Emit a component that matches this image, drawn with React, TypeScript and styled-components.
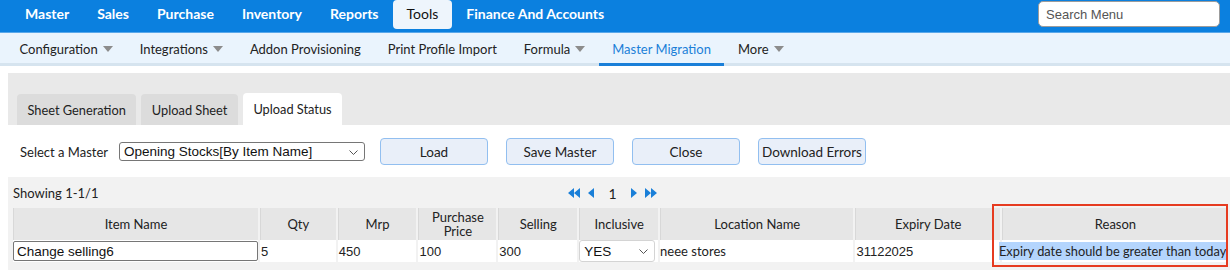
import styled, { createGlobalStyle } from "styled-components";

const BLUE = "#0b80df";
const LINK_BLUE = "#1a7fd8";

const GlobalStyle = createGlobalStyle`
  body {
    margin: 0;
    background: #ffffff;
    font-family: Lato, "Noto Sans", sans-serif;
    color: #222222;
  }
  * {
    box-sizing: border-box;
  }
`;

const TopBar = styled.div`
  display: flex;
  align-items: flex-start;
  height: 33px;
  padding-left: 11px;
  background: ${BLUE};
  border-bottom: 1px solid #5aa8ea;
`;

const NavItem = styled.div<{ active?: boolean }>`
  height: 29px;
  line-height: 28px;
  padding: 0 14px;
  font-size: 14px;
  font-weight: ${(p) => (p.active ? 400 : 700)};
  color: ${(p) => (p.active ? "#111111" : "#ffffff")};
  background: ${(p) => (p.active ? "#eef5fc" : "transparent")};
  border-radius: 4px;
`;

const Search = styled.input`
  margin: 1px 10px 0 auto;
  width: 182px;
  height: 26px;
  padding: 0 7px;
  border: 1px solid #9c9c9c;
  border-radius: 5px;
  font-family: "Liberation Sans", Arial, sans-serif;
  font-size: 13px;
  &::placeholder {
    color: #555555;
  }
`;

const SubBar = styled.div`
  display: flex;
  height: 33px;
  padding: 2px 0 0 6px;
  background: #eaf4fd;
  box-shadow: inset 0 -3px 0 #d6e4ef;
`;

const SubItem = styled.div<{ active?: boolean }>`
  display: flex;
  align-items: center;
  padding: 0 13.5px;
  font-size: 13px;
  color: ${(p) => (p.active ? LINK_BLUE : "#222222")};
  border-bottom: 3px solid ${(p) => (p.active ? LINK_BLUE : "transparent")};
`;

const Caret = styled.svg`
  margin-left: 5px;
`;

const Main = styled.div`
  padding: 7px 0 0 8px;
`;

const TabStrip = styled.div`
  display: flex;
  align-items: flex-end;
  gap: 5px;
  height: 52px;
  padding-left: 9px;
  background: #e9e9e9;
`;

const Tab = styled.div<{ active?: boolean }>`
  height: ${(p) => (p.active ? 32 : 31)}px;
  line-height: ${(p) => (p.active ? 33 : 32)}px;
  padding: 0 10.5px;
  font-size: 12.8px;
  background: ${(p) => (p.active ? "#ffffff" : "#dcdcdc")};
  border-radius: 4px 4px 0 0;
`;

const Toolbar = styled.div`
  display: flex;
  align-items: center;
  height: 51px;
  padding: 2px 0 0 12px;
  font-size: 13px;
`;

const SelectWrap = styled.div<{ w: number }>`
  position: relative;
  width: ${(p) => p.w}px;
  flex: none;
`;

const Select = styled.select<{ h: number; line: string }>`
  appearance: none;
  width: 100%;
  height: ${(p) => p.h}px;
  padding: 0 18px 0 4px;
  border: 1px solid ${(p) => p.line};
  border-radius: 3px;
  background: #ffffff;
  font-family: "Liberation Sans", Arial, sans-serif;
  font-size: 13.5px;
  color: #111111;
`;

const Chevron = styled.svg`
  position: absolute;
  right: 7px;
  top: 50%;
  margin-top: -2px;
  pointer-events: none;
`;

const Label = styled.span`
  margin-right: 11px;
`;

const ActionButton = styled.button`
  width: 108px;
  height: 27px;
  margin-left: 18px;
  padding: 0;
  border: 1px solid #92bff0;
  border-radius: 4px;
  background: #e9eff9;
  font-family: Lato, sans-serif;
  font-size: 13.5px;
  color: #222222;
  &:first-of-type {
    margin-left: 15px;
  }
`;

const ResultPanel = styled.div`
  position: relative;
  height: 93px;
  margin-top: 1px;
  padding: 0 0 0 5px;
  background: #f2f2f2;
`;

const InfoRow = styled.div`
  display: grid;
  grid-template-columns: 1fr auto 1fr;
  align-items: center;
  height: 31px;
  padding-right: 18px;
  font-size: 13px;
`;

const Pager = styled.div`
  display: flex;
  align-items: center;
  gap: 8px;
  color: #222222;
`;

const PageNum = styled.span`
  margin: 2px 6px 0;
  font-size: 14px;
`;

const Grid = styled.table`
  border-collapse: separate;
  border-spacing: 2px 0;
  margin-left: -2px;
  table-layout: fixed;
  font-size: 13px;
`;

const Head = styled.th<{ w: number }>`
  width: ${(p) => p.w}px;
  height: 32px;
  padding: 0 2px;
  background: #e6e6e6;
  font-weight: 400;
  line-height: 14px;
  text-align: center;
  border-left: 1px solid #d8d8d8;
`;

const Cell = styled.td`
  height: 22px;
  padding: 0;
  background: #ffffff;
  white-space: nowrap;
`;

const FieldText = styled.span`
  padding-left: 1px;
  font-family: "Liberation Sans", Arial, sans-serif;
  font-size: 13px;
`;

const NameInput = styled.input`
  width: 245px;
  height: 20px;
  padding: 0 3px;
  border: 1px solid #767676;
  border-radius: 2px;
  font-family: "Liberation Sans", Arial, sans-serif;
  font-size: 13.5px;
  color: #111111;
`;

const Highlight = styled.span`
  display: inline-block;
  margin-left: -3px;
  font-size: 12.8px;
  line-height: 18px;
  background: #b4d5fd;
`;

const RedBox = styled.div`
  position: absolute;
  left: 984px;
  top: 27px;
  width: 236px;
  height: 63px;
  border: 2px solid #e63b20;
  pointer-events: none;
`;

const menu = ["Master", "Sales", "Purchase", "Inventory", "Reports", "Tools", "Finance And Accounts"];
const subMenu = [
  { label: "Configuration", caret: true },
  { label: "Integrations", caret: true },
  { label: "Addon Provisioning" },
  { label: "Print Profile Import" },
  { label: "Formula", caret: true },
  { label: "Master Migration", active: true },
  { label: "More", caret: true },
];
const columns = [
  { label: "Item Name", w: 243 },
  { label: "Qty", w: 76 },
  { label: "Mrp", w: 79 },
  { label: "Purchase Price", w: 78 },
  { label: "Selling", w: 79 },
  { label: "Inclusive", w: 79 },
  { label: "Location Name", w: 194 },
  { label: "Expiry Date", w: 145 },
  { label: "Reason", w: 226 },
];

function DownCaret() {
  return (
    <Caret width="10" height="6" viewBox="0 0 10 6">
      <path d="M0 0h10L5 6z" fill="#8c8c8c" />
    </Caret>
  );
}

function SelectArrow() {
  return (
    <Chevron width="9" height="5" viewBox="0 0 9 5">
      <path d="M0.5 0.5L4.5 4.5L8.5 0.5" fill="none" stroke="#555" strokeWidth="1" />
    </Chevron>
  );
}

function PagerIcon({ dir, double }: { dir: "left" | "right"; double?: boolean }) {
  const single = dir === "left" ? "M6 0v10L0 5z" : "M0 0v10l6-5z";
  const pair = dir === "left" ? "M6 0v10L0 5zM12 0v10L6 5z" : "M0 0v10l6-5zM6 0v10l6-5z";
  return (
    <svg width={double ? 12 : 6} height="10" viewBox={double ? "0 0 12 10" : "0 0 6 10"}>
      <path d={double ? pair : single} fill={LINK_BLUE} />
    </svg>
  );
}

export default function App() {
  return (
    <>
      <GlobalStyle />
      <TopBar>
        {menu.map((m) => (
          <NavItem key={m} active={m === "Tools"}>
            {m}
          </NavItem>
        ))}
        <Search placeholder="Search Menu" />
      </TopBar>
      <SubBar>
        {subMenu.map((s) => (
          <SubItem key={s.label} active={s.active}>
            {s.label}
            {s.caret && <DownCaret />}
          </SubItem>
        ))}
      </SubBar>
      <Main>
        <TabStrip>
          <Tab>Sheet Generation</Tab>
          <Tab>Upload Sheet</Tab>
          <Tab active>Upload Status</Tab>
        </TabStrip>
        <Toolbar>
          <Label>Select a Master</Label>
          <SelectWrap w={246}>
            <Select h={19} line="#767676" defaultValue="os">
              <option value="os">Opening Stocks[By Item Name]</option>
            </Select>
            <SelectArrow />
          </SelectWrap>
          <ActionButton>Load</ActionButton>
          <ActionButton>Save Master</ActionButton>
          <ActionButton>Close</ActionButton>
          <ActionButton>Download Errors</ActionButton>
        </Toolbar>
        <ResultPanel>
          <InfoRow>
            <span>Showing 1-1/1</span>
            <Pager>
              <PagerIcon dir="left" double />
              <PagerIcon dir="left" />
              <PageNum>1</PageNum>
              <PagerIcon dir="right" />
              <PagerIcon dir="right" double />
            </Pager>
            <span />
          </InfoRow>
          <Grid>
            <thead>
              <tr>
                {columns.map((c) => (
                  <Head key={c.label} w={c.w}>
                    {c.label}
                  </Head>
                ))}
              </tr>
            </thead>
            <tbody>
              <tr>
                <Cell>
                  <NameInput defaultValue="Change selling6" />
                </Cell>
                <Cell>
                  <FieldText>5</FieldText>
                </Cell>
                <Cell>
                  <FieldText>450</FieldText>
                </Cell>
                <Cell>
                  <FieldText>100</FieldText>
                </Cell>
                <Cell>
                  <FieldText>300</FieldText>
                </Cell>
                <Cell>
                  <SelectWrap w={76}>
                    <Select h={22} line="#d4d4d4" defaultValue="yes">
                      <option value="yes">YES</option>
                    </Select>
                    <SelectArrow />
                  </SelectWrap>
                </Cell>
                <Cell>neee stores</Cell>
                <Cell>
                  <FieldText>31122025</FieldText>
                </Cell>
                <Cell>
                  <Highlight>Expiry date should be greater than today</Highlight>
                </Cell>
              </tr>
            </tbody>
          </Grid>
          <RedBox />
        </ResultPanel>
      </Main>
    </>
  );
}
